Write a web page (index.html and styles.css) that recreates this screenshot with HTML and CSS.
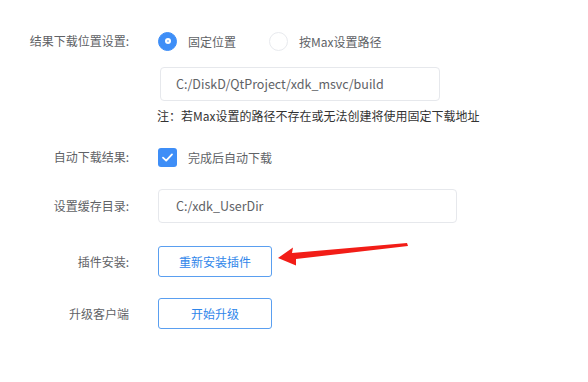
FILE: index.html
```html
<!DOCTYPE html>
<html lang="zh-CN">
<head>
    <meta charset="UTF-8">
    <title>设置</title>
    <link rel="stylesheet" href="styles.css">
</head>
<body>
    <div class="settings">
        <!-- 下载位置 -->
        <div class="row row-top">
            <div class="label">结果下载位置设置:</div>
            <div class="content">
                <div class="radios">
                    <span class="radio checked"><i></i></span>
                    <span class="radio-text">固定位置</span>
                    <span class="radio"></span>
                    <span class="radio-text">按Max设置路径</span>
                </div>
                <div class="input input-path">C:/DiskD/QtProject/xdk_msvc/build</div>
                <div class="note">注：若Max设置的路径不存在或无法创建将使用固定下载地址</div>
            </div>
        </div>

        <div class="row row-check">
            <div class="label">自动下载结果:</div>
            <span class="checkbox">
                <svg width="19" height="19" viewBox="0 0 19 19"><path d="M5 9.6 L8.2 12.6 L14 6.4" fill="none" stroke="#fff" stroke-width="1.8" stroke-linecap="round" stroke-linejoin="round"/></svg>
            </span>
            <span class="check-text">完成后自动下载</span>
        </div>

        <div class="row row-cache">
            <div class="label">设置缓存目录:</div>
            <div class="input input-cache">C:/xdk_UserDir</div>
        </div>

        <div class="row row-plugin">
            <div class="label">插件安装:</div>
            <button class="btn">重新安装插件</button>
        </div>

        <div class="row row-upgrade">
            <div class="label">升级客户端</div>
            <button class="btn">开始升级</button>
        </div>

        <!-- 标注箭头 -->
        <svg class="arrow" width="588" height="382" viewBox="0 0 588 382">
            <polygon points="278,258 293,247.5 292,253 407,243 408,246 296,259 296,265.5" fill="#f21d17"/>
        </svg>
    </div>
</body>
</html>
```

FILE: styles.css
```css
body{
    margin: 0;
    background: #fff;
    font-family: "Noto Sans CJK SC", "Noto Sans", sans-serif;
    font-size: 12px;
    color: #606266;
}
.settings{
    position: relative;
    width: 588px;
    height: 382px;
    padding-top: 31px;
    box-sizing: border-box;
}
.row{
    display: flex;
    align-items: center;
}
.row-top{
    align-items: flex-start;
}
.label{
    width: 129px;
    margin-right: 29px;
    text-align: right;
    line-height: 20px;
    color: #606266;
    white-space: nowrap;
}
.content{
    display: flex;
    flex-direction: column;
}
.radios{
    display: flex;
    align-items: center;
    height: 20px;
}
.radio{
    width: 19px;
    height: 19px;
    border-radius: 50%;
    border: 1px solid #e8eaee;
    box-sizing: border-box;
    display: flex;
    align-items: center;
    justify-content: center;
}
.radio.checked{
    background: #3e8ef7;
    border-color: #3e8ef7;
}
.radio.checked i{
    width: 6px;
    height: 6px;
    border-radius: 50%;
    background: #fff;
    position: relative;
}
.radio.checked i::after{
    content: "";
    position: absolute;
    left: 2px;
    top: 2px;
    width: 2px;
    height: 2px;
    border-radius: 50%;
    background: #8dbcfa;
}
.radio-text{
    margin-left: 11px;
    margin-right: 33px;
}
.radio-text:last-child{
    margin-right: 0;
}
.input{
    height: 34px;
    line-height: 32px;
    border: 1px solid #e6e8ec;
    border-radius: 4px;
    box-sizing: border-box;
    padding-left: 15px;
    color: #606266;
    font-size: 12.5px;
}
.input-path{
    width: 280px;
    margin-top: 16px;
    margin-left: 2px;
}
.note{
    margin-top: 6px;
    margin-left: -1px;
    line-height: 18px;
    color: #333;
}
.row-check{
    margin-top: 22px;
}
.checkbox{
    width: 19px;
    height: 19px;
    border-radius: 3px;
    background: #3e8ef7;
    display: block;
}
.checkbox svg{
    display: block;
}
.check-text{
    margin-left: 11px;
}
.row-cache{
    margin-top: 22px;
}
.input-cache{
    width: 299px;
    padding-left: 17px;
}
.row-plugin{
    margin-top: 23px;
}
.row-upgrade{
    margin-top: 21px;
}
.btn{
    width: 114px;
    height: 31px;
    border: 1px solid #5a9ff0;
    border-radius: 3px;
    background: #fff;
    color: #2f86ea;
    font-family: "Noto Sans CJK SC", sans-serif;
    font-size: 12px;
    padding: 0;
}
.arrow{
    position: absolute;
    left: 0;
    top: 0;
    pointer-events: none;
}
```
